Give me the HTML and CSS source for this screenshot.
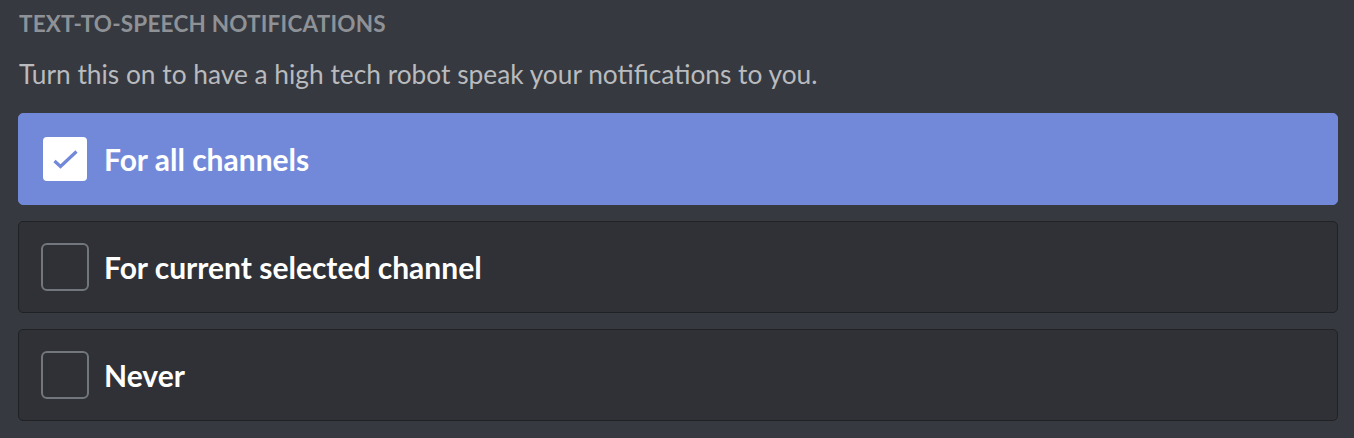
FILE: index.html
```html
<!DOCTYPE html>
<html lang="en">

<head>
    <meta charset="UTF-8">
    <title>Text-to-speech notifications</title>
    <link rel="stylesheet" href="styles.css">
</head>

<body>
    <div class="section">
        <h5 class="title">Text-to-speech notifications</h5>
        <p class="desc">Turn this on to have a high tech robot speak your notifications to you.</p>
        <div class="options">
            <div class="option selected">
                <span class="box">
                    <svg width="44" height="44" viewBox="0 0 44 44">
                        <polyline points="11.5,24 17.5,29.5 33.5,14.5" fill="none" stroke="#7289da" stroke-width="3.2" />
                    </svg>
                </span>
                <span class="label">For all channels</span>
            </div>
            <div class="option">
                <span class="box"></span>
                <span class="label">For current selected channel</span>
            </div>
            <div class="option">
                <span class="box"></span>
                <span class="label">Never</span>
            </div>
        </div>
    </div>
</body>

</html>
```

FILE: styles.css
```css
body {
    margin: 0;
    background: #36393f;
    font-family: Lato, "Open Sans", sans-serif;
}

.section {
    padding: 11px 16px 0 18px;
}

.title {
    margin: 0;
    font-size: 22.5px;
    line-height: 26px;
    font-weight: 700;
    letter-spacing: 0.2px;
    text-transform: uppercase;
    color: #8e9297;
    padding-left: 1px;
}

.desc {
    margin: 22px 0 0 1px;
    font-size: 26.3px;
    line-height: 30px;
    color: #b9bbbe;
}

.options {
    margin-top: 24px;
    display: flex;
    flex-direction: column;
    gap: 16px;
}

.option {
    display: flex;
    align-items: center;
    height: 90px;
    padding: 0 22px;
    border: 1px solid #202225;
    border-radius: 5px;
    background: #2f3136;
}

.option.selected {
    background: #7289da;
    border-color: #7289da;
}

.box {
    width: 48px;
    height: 48px;
    box-sizing: border-box;
    border: 2px solid #72767d;
    border-radius: 6px;
    flex-shrink: 0;
}

.selected .box {
    background: #fff;
    border: none;
    width: 44px;
    height: 44px;
    margin: 0 2px;
    border-radius: 4px;
}

.box svg {
    display: block;
}

.label {
    margin-left: 15px;
    font-size: 30px;
    font-weight: 700;
    color: #fff;
}
```
